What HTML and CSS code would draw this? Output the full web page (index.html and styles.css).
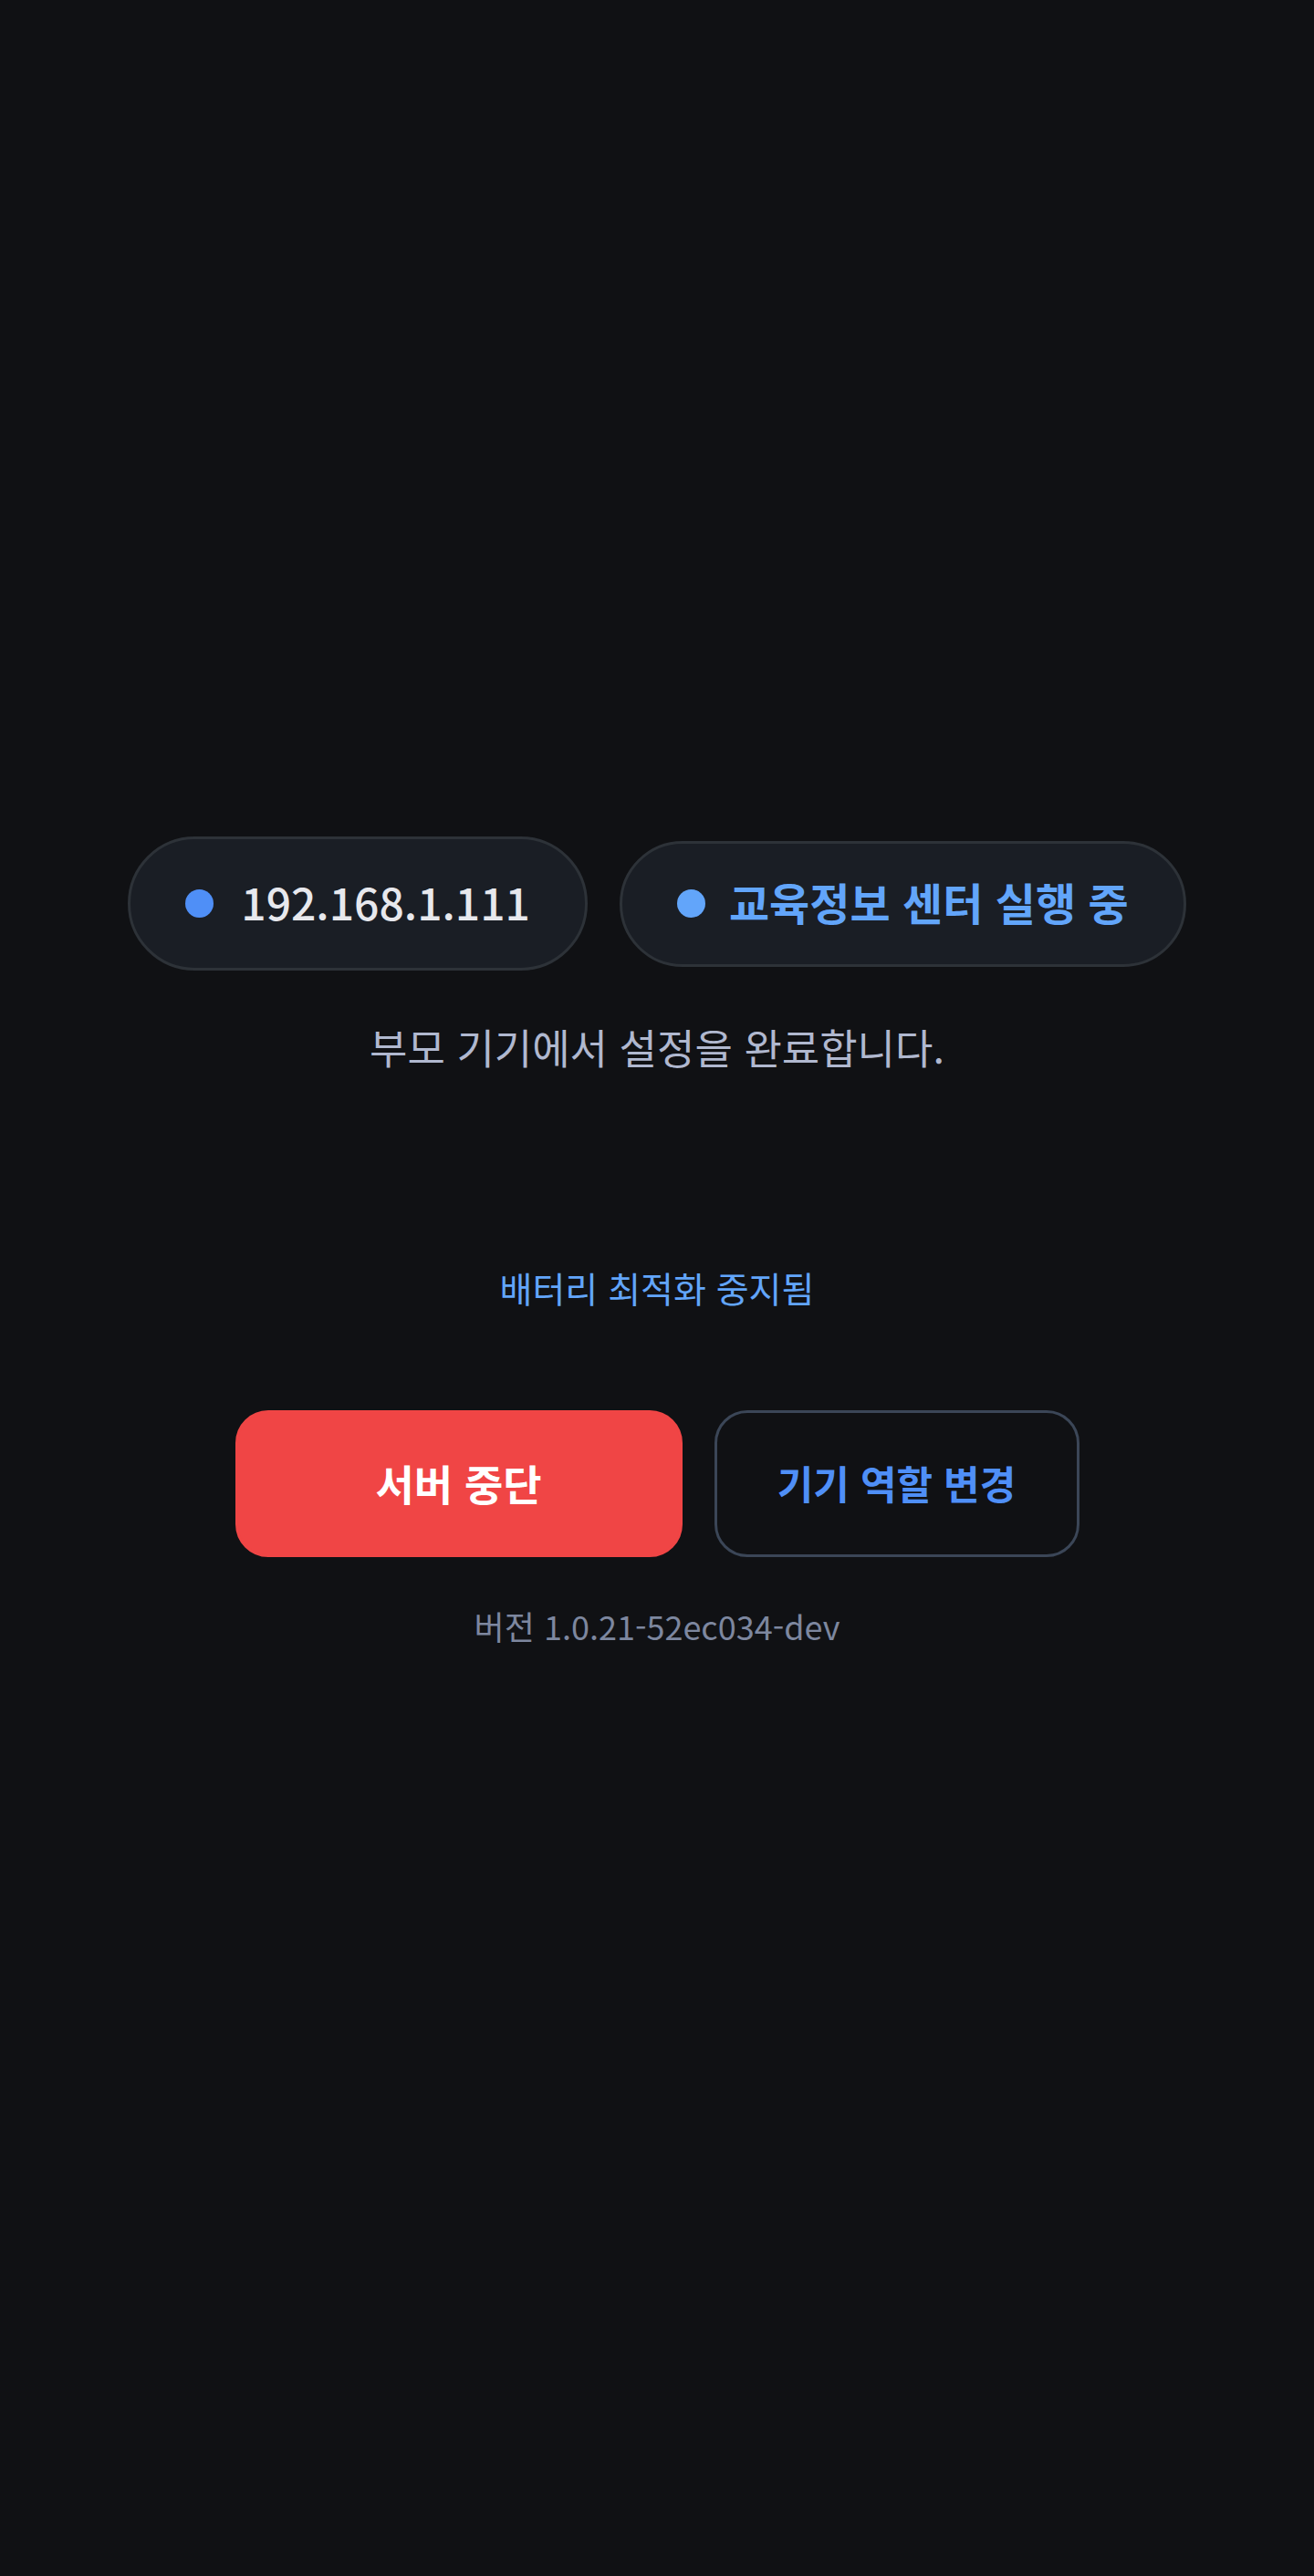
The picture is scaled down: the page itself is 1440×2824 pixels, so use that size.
FILE: index.html
```html
<!DOCTYPE html>
<html lang="ko">
<head>
  <meta charset="UTF-8" />
  <meta name="viewport" content="width=device-width, initial-scale=1.0"/>
  <title>교육정보 센터</title>
  <link rel="stylesheet" href="styles.css">
</head>
<body>
  <main class="screen">
    <div class="status-row">
      <div class="pill pill-ip"><span class="dot"></span><span class="label">192.168.1.111</span></div>
      <div class="pill pill-state"><span class="dot"></span><span class="label">교육정보 센터 실행 중</span></div>
    </div>
    <p class="hint">부모 기기에서 설정을 완료합니다.</p>
    <p class="battery">배터리 최적화 중지됨</p>
    <div class="actions">
      <button type="button" class="btn btn-stop">서버 중단</button>
      <button type="button" class="btn btn-role">기기 역할 변경</button>
    </div>
    <p class="version">버전 1.0.21-52ec034-dev</p>
  </main>
</body>
</html>
```
FILE: styles.css
```css
* { box-sizing: border-box; }
body {
  margin: 0;
  background: #101114;
  font-family: "Noto Sans CJK KR", sans-serif;
}
.screen {
  min-height: 100vh;
  padding-bottom: 100px;
  display: flex;
  flex-direction: column;
  align-items: center;
  justify-content: center;
}
p { margin: 0; }
.status-row {
  display: flex;
  align-items: center;
  gap: 35px;
}
.pill {
  display: flex;
  align-items: center;
  padding: 0 60px;
  background: #1a1e25;
  border: 3px solid #2d3238;
  border-radius: 80px;
  font-size: 48px;
  white-space: nowrap;
}
.label { padding-bottom: 6px; }
.dot {
  width: 31px;
  height: 31px;
  border-radius: 50%;
}
.pill-ip {
  height: 147px;
  gap: 30px;
  font-weight: 500;
  color: #e7e8ed;
}
.pill-ip .dot { background: #4f8ff7; }
.pill-state {
  height: 138px;
  gap: 26px;
  font-weight: 700;
  color: #62a5fa;
}
.pill-state .dot { background: #62a5fa; }
.hint {
  margin-top: 52px;
  font-size: 45px;
  line-height: 64px;
  color: #b0b8cf;
}
.battery {
  margin-top: 201px;
  font-size: 39px;
  line-height: 60px;
  color: #62a5fa;
}
.actions {
  display: flex;
  gap: 35px;
  margin-top: 105px;
}
.btn {
  height: 161px;
  padding: 0 0 4px;
  border: 3px solid transparent;
  border-radius: 36px;
  font-family: inherit;
  font-weight: 700;
}
.btn-stop {
  width: 490px;
  background: #f04545;
  border-color: #f04545;
  font-size: 46px;
  color: #fff;
}
.btn-role {
  width: 400px;
  background: none;
  border-color: #3b4657;
  font-size: 43px;
  color: #4f8ff7;
}
.version {
  margin-top: 50px;
  font-size: 36px;
  line-height: 50px;
  color: #7d879f;
}
```
